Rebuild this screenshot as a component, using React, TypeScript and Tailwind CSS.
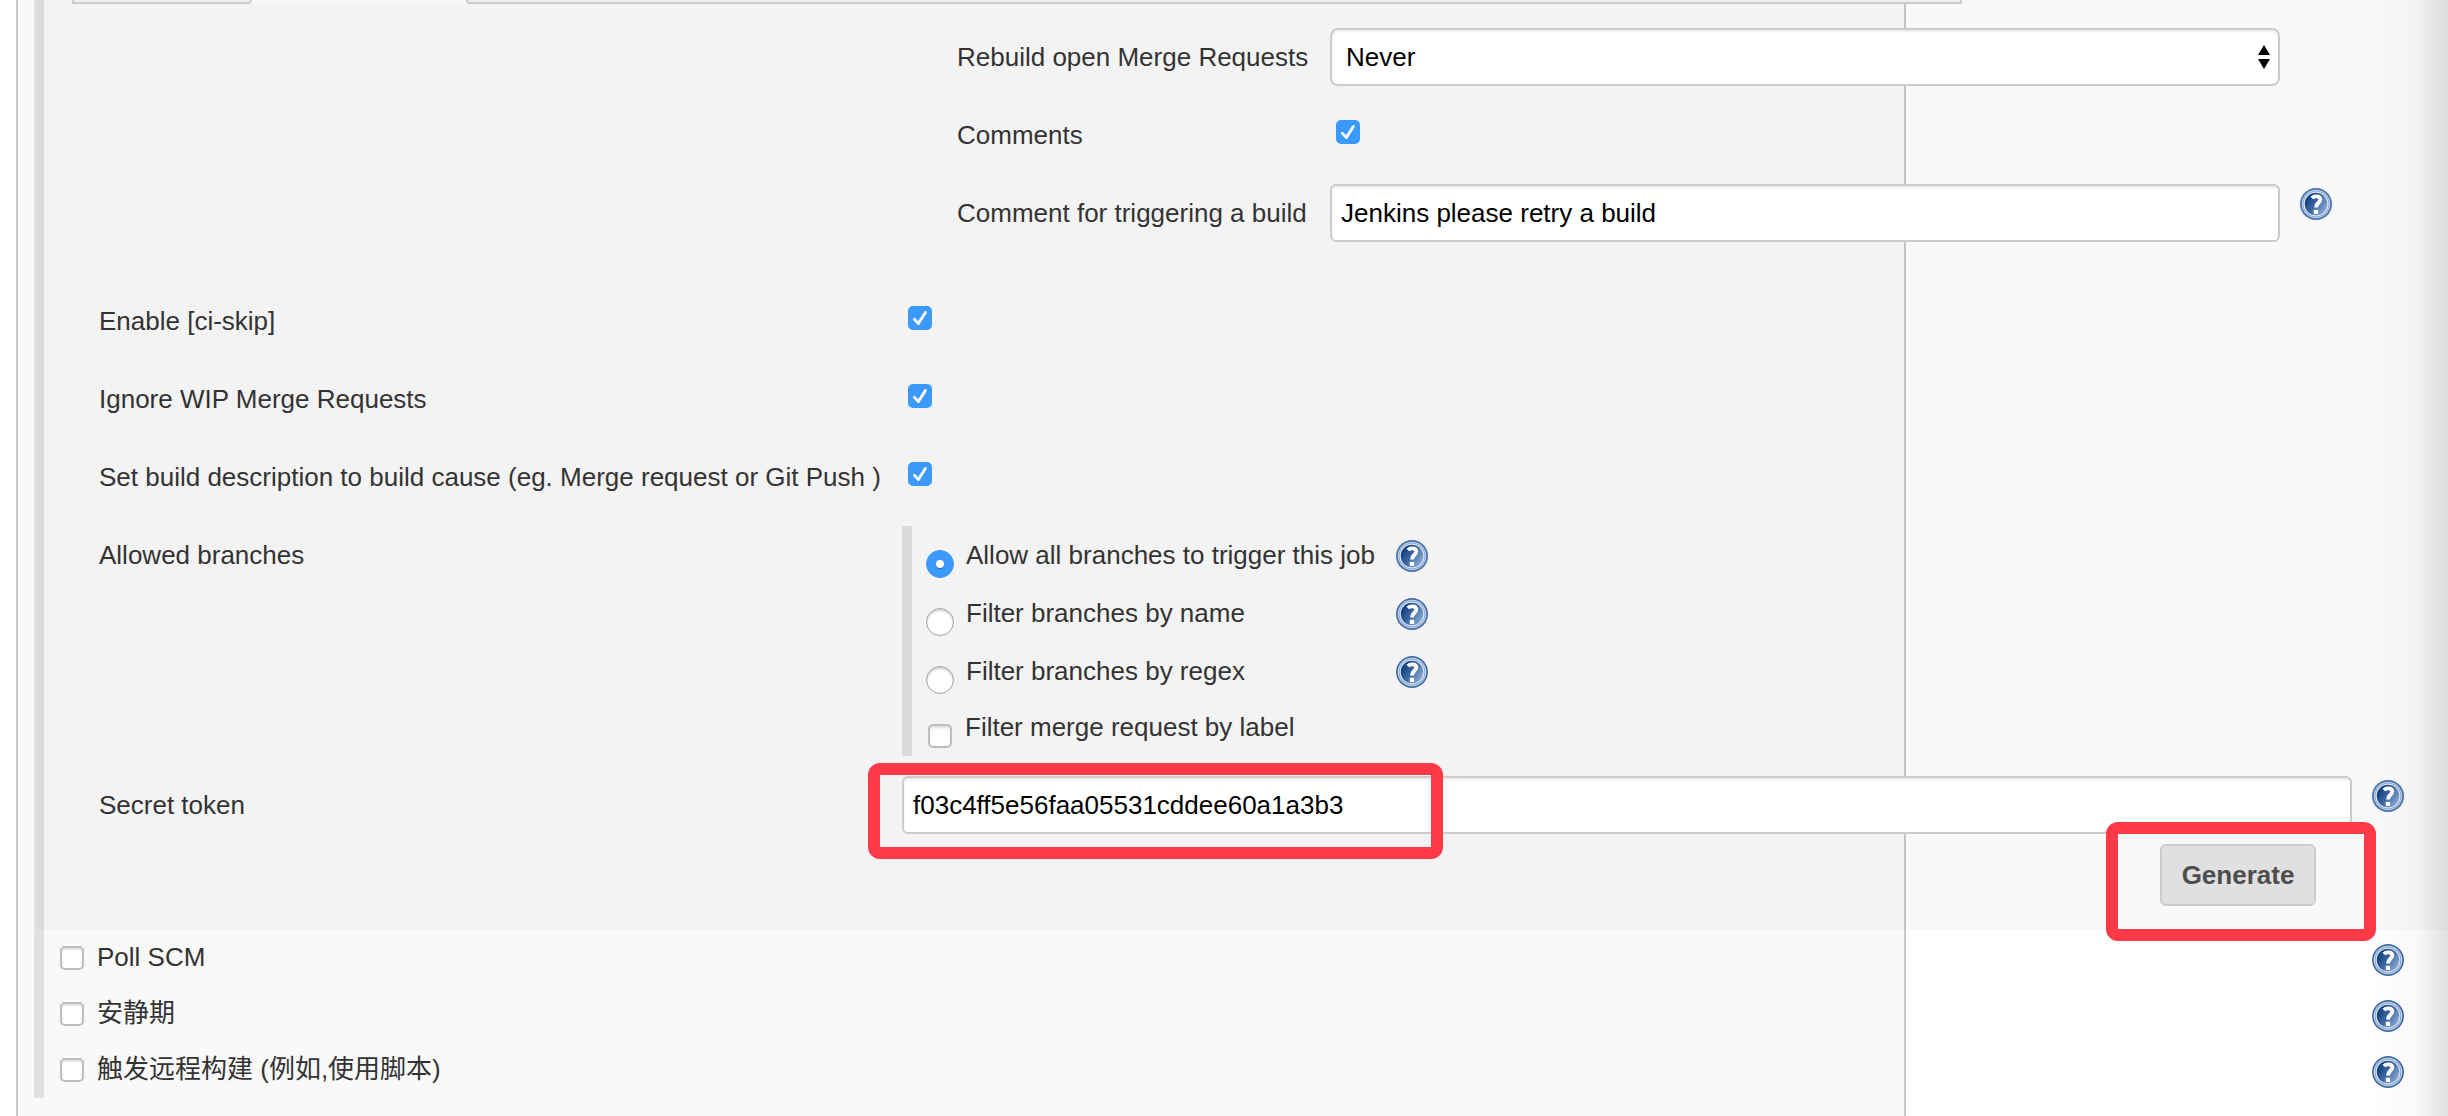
import type { ReactNode } from "react";

const FIELD =
  "block h-[58px] w-full border-2 border-[#ccc] bg-white text-black shadow-[inset_0_2px_2px_rgba(0,0,0,0.075)] outline-none";
const LABEL = "block leading-[58px]";

function HelpButton({ topic }: { topic: string }) {
  return (
    <button type="button" aria-label={"Help for " + topic} className="block size-8 shrink-0 cursor-pointer">
      <svg viewBox="0 0 32 32" className="size-8">
        <defs>
          <linearGradient id="helpFill" x1="0" y1="0.2" x2="1" y2="0.8">
            <stop offset="0.1" stopColor="#12407f" />
            <stop offset="0.45" stopColor="#3c66a3" />
            <stop offset="1" stopColor="#8db0da" />
          </linearGradient>
        </defs>
        <circle cx="16" cy="16" r="16" fill="#4670ab" />
        <circle cx="16" cy="16" r="14.3" fill="#c3d1e6" />
        <circle cx="16" cy="16" r="13.2" fill="#7c9ac6" />
        <circle cx="16" cy="16" r="12.5" fill="#dde6f2" />
        <circle cx="16" cy="16" r="11.2" fill="url(#helpFill)" />
        <path
          d="M11.8 10c1.2-1.2 2.7-1.7 4.3-1.7 2.6 0 4.2 1.3 4.2 3.3 0 3.1-4.3 3.4-4.3 7.8"
          fill="none"
          stroke="#fff"
          strokeWidth="3.8"
        />
        <rect x="13.8" y="21.8" width="4.4" height="4.2" rx="0.8" fill="#fff" />
      </svg>
    </button>
  );
}

function Checkbox({ id, checked = false }: { id: string; checked?: boolean }) {
  return (
    <span className="relative block size-6 shrink-0">
      <input
        id={id}
        type="checkbox"
        defaultChecked={checked}
        className="peer block size-6 appearance-none rounded-[5px] border-2 border-[#bdbdbd] bg-white shadow-[inset_0_2px_2px_rgba(0,0,0,0.12)] checked:border-[#3b99fc] checked:bg-[#3b99fc] checked:shadow-none"
      />
      <svg
        viewBox="0 0 24 24"
        className="pointer-events-none absolute inset-0 hidden size-6 peer-checked:block"
        fill="none"
        stroke="#fff"
        strokeWidth="2.8"
        strokeLinecap="round"
        strokeLinejoin="round"
      >
        <path d="M6.4 13.2l4 4.4L17.4 6.4" />
      </svg>
    </span>
  );
}

function Radio({ id, checked = false }: { id: string; checked?: boolean }) {
  return (
    <span className="relative block size-7 shrink-0">
      <input
        id={id}
        type="radio"
        name="branches"
        defaultChecked={checked}
        className="peer block size-7 appearance-none rounded-full border border-[#a3a3a3] bg-white shadow-[inset_0_2px_2px_rgba(0,0,0,0.18)] checked:border-[#3b99fc] checked:bg-[#3b99fc] checked:shadow-none"
      />
      <span className="pointer-events-none absolute inset-0 m-auto hidden size-2 rounded-full bg-white shadow-[0_1px_1px_rgba(0,0,0,0.3)] peer-checked:block" />
    </span>
  );
}

function Row({ id, label, children, help }: { id?: string; label: string; children: ReactNode; help?: ReactNode }) {
  return (
    <div className="grid grid-cols-[803px_minmax(0,1fr)_96px] items-start">
      {id ? (
        <label htmlFor={id} className={LABEL}>
          {label}
        </label>
      ) : (
        <span className={LABEL}>{label}</span>
      )}
      {children}
      <div className="pt-1 pl-5">{help}</div>
    </div>
  );
}

function NestedRow({ id, label, children, help }: { id: string; label: string; children: ReactNode; help?: ReactNode }) {
  return (
    <div className="grid grid-cols-[373px_minmax(0,1fr)_72px] items-start">
      <label htmlFor={id} className={LABEL}>
        {label}
      </label>
      {children}
      <div className="pt-1 pl-5">{help}</div>
    </div>
  );
}

const flags = [
  { id: "ci-skip", label: "Enable [ci-skip]" },
  { id: "ignore-wip", label: "Ignore WIP Merge Requests" },
  { id: "set-desc", label: "Set build description to build cause (eg. Merge request or Git Push )" },
];

const branches = [
  { id: "branch-all", label: "Allow all branches to trigger this job", checked: true },
  { id: "branch-name", label: "Filter branches by name", checked: false },
  { id: "branch-regex", label: "Filter branches by regex", checked: false },
];

const triggers = [
  { id: "poll-scm", label: "Poll SCM" },
  { id: "quiet-period", label: "安静期" },
  { id: "remote-build", label: "触发远程构建 (例如,使用脚本)" },
];

function GitLabSettings() {
  return (
    <section className="-ml-1.5 bg-black/[0.025]">
      <div className="flex h-1 pr-[486px] pl-[34px]">
        <div className="w-[180px] rounded-br-sm border-2 border-t-0 border-[#ccc] bg-[#eee]" />
        <div className="w-[214px] bg-[#f9f9f9]" />
        <div className="flex-1 rounded-bl-sm border-2 border-t-0 border-[#ccc] bg-[#eee]" />
      </div>

      <div className="pt-6 pb-6 pl-[61px]">
        <div className="mr-24 ml-[858px] flex flex-col gap-5">
          <NestedRow id="rebuild" label="Rebuild open Merge Requests">
            <div className="relative">
              <select id="rebuild" className={FIELD + " appearance-none rounded-lg px-3.5"}>
                <option>Never</option>
              </select>
              <svg viewBox="0 0 12 24" className="pointer-events-none absolute top-[17px] right-2.5 h-6 w-3">
                <path d="M6 0l6 10H0zM6 24l6-10H0z" fill="#000" />
              </svg>
            </div>
          </NestedRow>
          <NestedRow id="comments" label="Comments">
            <div className="pt-3.5 pl-1.5">
              <Checkbox id="comments" checked />
            </div>
          </NestedRow>
          <NestedRow
            id="comment-trigger"
            label="Comment for triggering a build"
            help={<HelpButton topic="Comment for triggering a build" />}
          >
            <input
              id="comment-trigger"
              type="text"
              defaultValue="Jenkins please retry a build"
              className={FIELD + " rounded-md px-[9px]"}
            />
          </NestedRow>
        </div>

        <div className="mt-[50px] flex flex-col gap-5">
          {flags.map((f) => (
            <Row key={f.id} id={f.id} label={f.label}>
              <div className="pt-3.5 pl-1.5">
                <Checkbox id={f.id} checked />
              </div>
            </Row>
          ))}

          <Row label="Allowed branches">
            <div className="border-l-10 border-[#dadada] pl-3.5">
              {branches.map((b) => (
                <div key={b.id} className="flex h-[58px] items-start">
                  <div className="pt-6">
                    <Radio id={b.id} checked={b.checked} />
                  </div>
                  <label htmlFor={b.id} className="w-[430px] pl-3 leading-[58px]">
                    {b.label}
                  </label>
                  <div className="pt-3.5 pl-3">
                    <HelpButton topic={b.label} />
                  </div>
                </div>
              ))}
              <div className="flex h-14 items-start pl-0.5">
                <div className="pt-6">
                  <Checkbox id="branch-label" />
                </div>
                <label htmlFor="branch-label" className="pl-[13px] leading-[54px]">
                  Filter merge request by label
                </label>
              </div>
            </div>
          </Row>

          <Row id="secret" label="Secret token" help={<HelpButton topic="Secret token" />}>
            <div className="relative">
              <input
                id="secret"
                type="text"
                defaultValue="f03c4ff5e56faa05531cddee60a1a3b3"
                className={FIELD + " rounded-md px-[9px]"}
              />
              <div className="pointer-events-none absolute -top-[13px] -left-[34px] z-10 h-24 w-[575px] rounded-xl border-12 border-[#ff3946]" />
            </div>
          </Row>
        </div>

        <div className="mt-2.5 mr-[132px] flex justify-end">
          <div className="relative">
            <button
              type="button"
              className="block h-[62px] w-[156px] rounded-md border-2 border-[#ccc] bg-[#e0e0e0] font-bold text-[#4d4d4d]"
            >
              Generate
            </button>
            <div className="pointer-events-none absolute -top-[22px] -left-[54px] z-10 h-[119px] w-[270px] rounded-xl border-12 border-[#ff3946]" />
          </div>
        </div>
      </div>
    </section>
  );
}

export default function App() {
  return (
    <main className="relative flex min-h-screen overflow-hidden bg-white pr-[542px] pl-4 font-['Liberation_Sans','Noto_Sans_CJK_SC',sans-serif] text-[26px] text-[#333]">
      <div className="min-w-0 flex-1 border-x-2 border-[#c8c8c8] bg-[#f9f9f9]">
        <form className="-mr-[544px] ml-4 border-l-10 border-[#e0e0e0]">
          <GitLabSettings />
          {triggers.map((t) => (
            <div key={t.id} className="flex h-14 items-start pr-11 pl-4">
              <div className="pt-4">
                <Checkbox id={t.id} />
              </div>
              <label htmlFor={t.id} className="flex-1 pl-[13px] leading-[54px]">
                {t.label}
              </label>
              <div className="pt-3.5">
                <HelpButton topic={t.label} />
              </div>
            </div>
          ))}
        </form>
      </div>
      <div className="pointer-events-none absolute inset-y-0 right-0 w-20 bg-linear-to-r from-black/0 via-black/[0.025] via-60% to-black/12" />
    </main>
  );
}
